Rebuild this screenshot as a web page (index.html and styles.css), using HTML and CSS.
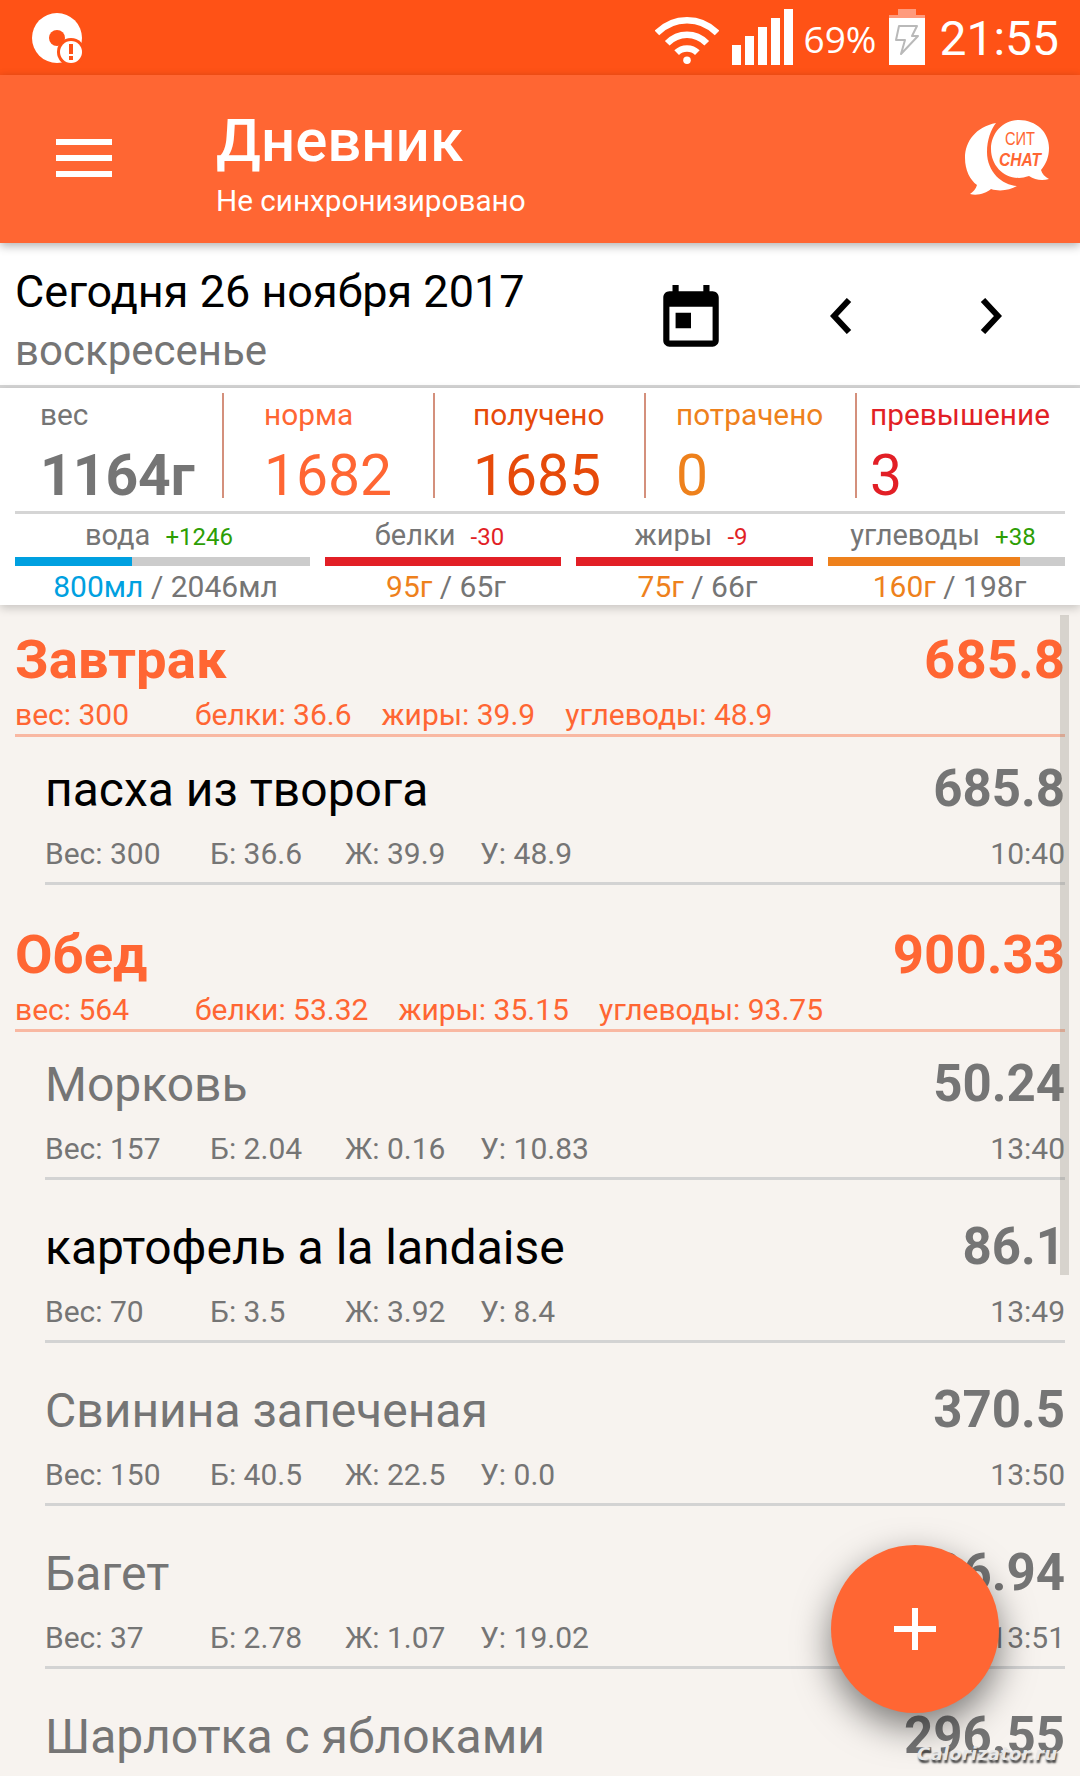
FILE: index.html
```html
<!DOCTYPE html>
<html lang="ru">

<head>
    <meta charset="UTF-8">
    <title>Дневник</title>
    <link rel="stylesheet" href="styles.css">
</head>

<body>
    <div id="wrap">
        <div class="status">
            <svg class="status-app" width="56" height="56" viewBox="0 0 56 56">
                <circle cx="25" cy="25" r="25" fill="#fff" />
                <circle cx="25" cy="25" r="8" fill="#ff5216" />
                <circle cx="39" cy="39" r="14" fill="#ff5216" />
                <circle cx="39" cy="39" r="11" fill="#fff" />
                <rect x="37" y="31" width="4" height="10" fill="#ff5216" />
                <rect x="37" y="43" width="4" height="4" fill="#ff5216" />
            </svg>
            <div class="status-right">
                <svg class="status-wifi" width="64" height="51" viewBox="0 0 68 54">
                    <path d="M2 20C20 2 48 2 66 20" />
                    <path d="M13 31C25 19 43 19 55 31" />
                    <path d="M23 41C29 35 39 35 45 41" />
                    <circle cx="34" cy="49" r="4" fill="#fff" stroke="none" />
                </svg>
                <div class="signal">
                    <span class="s1"></span>
                    <span class="s2"></span>
                    <span class="s3"></span>
                    <span class="s4"></span>
                    <span class="s5"></span>
                </div>
                <span class="percent">69%</span>
                <svg class="battery" width="36" height="56" viewBox="0 0 36 56">
                    <rect x="9" y="0" width="18" height="6" fill="#ff9a7c" />
                    <rect x="0" y="6" width="36" height="3" fill="#ff9a7c" />
                    <rect x="0" y="9" width="36" height="47" fill="#fff" />
                    <path d="M10 17H28L23 27H29L12 45L16 31H7Z" fill="none" stroke="#b9b9b9" stroke-width="2" stroke-linejoin="round" />
                </svg>
                <span class="clock">21:55</span>
            </div>
        </div>

        <div class="toolbar">
            <div class="burger"><span></span><span></span><span></span></div>
            <div class="toolbar-title">
                <h1>Дневник</h1>
                <p>Не синхронизировано</p>
            </div>
            <svg class="chat" width="90" height="76" viewBox="0 0 90 76">
                <path d="M32 3C12 7 1 21 1 38C1 50 6 60 13 65C12 69 9 72 6 74C14 76 22 73 27 69C36 72 46 70 53 66C38 65 23 52 23 32C23 20 27 9 32 3Z" fill="#fff" />
                <path d="M55 0C72 0 85 12 85 28C85 37 82 44 77 50C78 54 81 57 85 59C78 61 71 60 65 56C61 57 58 58 55 58C39 58 27 45 27 29C27 13 39 0 55 0Z" fill="#fff" />
                <text x="41" y="25" class="chat-top" textLength="30" lengthAdjust="spacingAndGlyphs">СИТ</text>
                <text x="35" y="46" class="chat-bottom" textLength="42" lengthAdjust="spacingAndGlyphs">CHAT</text>
            </svg>
        </div>

        <div class="date">
            <div class="date-text">
                <div class="date-main">Сегодня 26 ноября 2017</div>
                <div class="date-sub">воскресенье</div>
            </div>
            <svg class="cal" width="74" height="74" viewBox="0 0 24 24">
                <path d="M12 10H7v5h5zM16 1v2H8V1H6v2H5c-1.11 0-1.99.9-1.99 2L3 19c0 1.1.89 2 2 2h14c1.1 0 2-.9 2-2V5c0-1.1-.9-2-2-2h-1V1h-2zm3 18H5V8h14v11z" />
            </svg>
            <svg class="arrow-left" width="22" height="36" viewBox="0 0 22 36">
                <path d="M19 2L4 18L19 34" />
            </svg>
            <svg class="arrow-right" width="22" height="36" viewBox="0 0 22 36">
                <path d="M3 2L18 18L3 34" />
            </svg>
        </div>

        <div class="summary">
            <div class="totals">
                <div class="total t-weight"><span>вес</span><b>1164г</b></div>
                <div class="total t-norm"><span>норма</span><b>1682</b></div>
                <div class="total t-got"><span>получено</span><b>1685</b></div>
                <div class="total t-spent"><span>потрачено</span><b>0</b></div>
                <div class="total t-over"><span>превышение</span><b>3</b></div>
            </div>
            <div class="macros">
                <div class="macro">
                    <div class="macro-name">вода <em class="plus">+1246</em></div>
                    <div class="bar"><div class="fill blue" style="width: 39.5%"></div></div>
                    <div class="macro-val"><span class="c-blue">800мл</span> / 2046мл</div>
                </div>
                <div class="macro">
                    <div class="macro-name">белки <em class="minus">-30</em></div>
                    <div class="bar"><div class="fill red" style="width: 100%"></div></div>
                    <div class="macro-val"><span class="c-orange">95г</span> / 65г</div>
                </div>
                <div class="macro">
                    <div class="macro-name">жиры <em class="minus">-9</em></div>
                    <div class="bar"><div class="fill red" style="width: 100%"></div></div>
                    <div class="macro-val"><span class="c-orange">75г</span> / 66г</div>
                </div>
                <div class="macro">
                    <div class="macro-name">углеводы <em class="plus">+38</em></div>
                    <div class="bar"><div class="fill orange" style="width: 81%"></div></div>
                    <div class="macro-val"><span class="c-orange">160г</span> / 198г</div>
                </div>
            </div>
        </div>

        <div class="list">
            <div class="meal top">
                <div class="meal-top"><span>Завтрак</span><span>685.8</span></div>
                <div class="meal-sub"><span class="m-w">вес: 300</span><span>белки: 36.6</span><span>жиры: 39.9</span><span>углеводы: 48.9</span></div>
            </div>
            <div class="item first">
                <div class="item-top"><span class="dark">пасха из творога</span><b>685.8</b></div>
                <div class="item-sub"><span class="i-w">Вес: 300</span><span class="i-b">Б: 36.6</span><span class="i-f">Ж: 39.9</span><span class="i-c">У: 48.9</span><span class="time">10:40</span></div>
            </div>

            <div class="meal next">
                <div class="meal-top"><span>Обед</span><span>900.33</span></div>
                <div class="meal-sub"><span class="m-w">вес: 564</span><span>белки: 53.32</span><span>жиры: 35.15</span><span>углеводы: 93.75</span></div>
            </div>
            <div class="item first">
                <div class="item-top"><span>Морковь</span><b>50.24</b></div>
                <div class="item-sub"><span class="i-w">Вес: 157</span><span class="i-b">Б: 2.04</span><span class="i-f">Ж: 0.16</span><span class="i-c">У: 10.83</span><span class="time">13:40</span></div>
            </div>
            <div class="item">
                <div class="item-top"><span class="dark">картофель a la landaise</span><b>86.1</b></div>
                <div class="item-sub"><span class="i-w">Вес: 70</span><span class="i-b">Б: 3.5</span><span class="i-f">Ж: 3.92</span><span class="i-c">У: 8.4</span><span class="time">13:49</span></div>
            </div>
            <div class="item">
                <div class="item-top"><span>Свинина запеченая</span><b>370.5</b></div>
                <div class="item-sub"><span class="i-w">Вес: 150</span><span class="i-b">Б: 40.5</span><span class="i-f">Ж: 22.5</span><span class="i-c">У: 0.0</span><span class="time">13:50</span></div>
            </div>
            <div class="item">
                <div class="item-top"><span>Багет</span><b>96.94</b></div>
                <div class="item-sub"><span class="i-w">Вес: 37</span><span class="i-b">Б: 2.78</span><span class="i-f">Ж: 1.07</span><span class="i-c">У: 19.02</span><span class="time">13:51</span></div>
            </div>
            <div class="item">
                <div class="item-top"><span>Шарлотка с яблоками</span><b>296.55</b></div>
            </div>
        </div>

        <div class="scroll"></div>
        <div class="fab"><span class="fab-h"></span><span class="fab-v"></span></div>
        <div class="mark">Calorizator.ru</div>
    </div>
</body>

</html>
```

FILE: styles.css
```css
* {
    margin: 0;
    padding: 0;
    box-sizing: border-box;
}

html,
body {
    width: 1080px;
    height: 1776px;
    overflow: hidden;
}

body {
    font-family: Roboto, "Noto Sans", sans-serif;
    color: #757575;
    background: #f7f3ef;
}

#wrap {
    position: relative;
    width: 1080px;
    height: 1776px;
    overflow: hidden;
}

/* status bar */
.status {
    height: 75px;
    background: #ff5216;
    display: flex;
    justify-content: space-between;
    align-items: flex-start;
    padding: 13px 21px 0 32px;
    color: #fff;
}

.status-right {
    display: flex;
    align-items: flex-start;
    margin-top: -4px;
}

.status-wifi {
    margin: 5px 0 0 0;
}

.status-wifi path {
    fill: none;
    stroke: #fff;
    stroke-width: 7;
}

.signal {
    display: flex;
    align-items: flex-end;
    gap: 4px;
    height: 56px;
    margin-left: 13px;
}

.signal span {
    width: 9px;
    background: #fff;
}

.s1 { height: 20px; }
.s2 { height: 29px; }
.s3 { height: 38px; }
.s4 { height: 47px; }
.s5 { height: 56px; }

.percent {
    font-family: "Open Sans", sans-serif;
    font-size: 37px;
    line-height: 56px;
    margin: 2px 0 0 11px;
}

.battery {
    margin-left: 13px;
}

.clock {
    font-size: 48px;
    line-height: 56px;
    margin: 2px 0 0 14px;
}

/* toolbar */
.toolbar {
    position: relative;
    height: 168px;
    background: #ff6633;
    display: flex;
    align-items: flex-start;
    color: #fff;
    box-shadow: 0 3px 9px rgba(0, 0, 0, .3);
}

.burger {
    width: 56px;
    margin: 64px 0 0 56px;
    display: flex;
    flex-direction: column;
    gap: 10px;
}

.burger span {
    height: 6px;
    background: #fff;
}

.toolbar-title {
    margin: 37px 0 0 104px;
    flex: 1;
}

.toolbar-title h1 {
    font-size: 60px;
    font-weight: 500;
    line-height: 58px;
}

.toolbar-title p {
    font-size: 29.7px;
    line-height: 36px;
    margin-top: 13px;
}

.chat {
    margin: 45px 26px 0 0;
}

.chat-top,
.chat-bottom {
    fill: #ff6633;
    font-family: "Liberation Sans", sans-serif;
}

.chat-top {
    font-size: 19px;
}

.chat-bottom {
    font-size: 18px;
    font-weight: 700;
    font-style: italic;
}

/* date row */
.date {
    height: 145px;
    background: #fff;
    border-bottom: 3px solid #d5d5d5;
    display: flex;
    align-items: flex-start;
    padding-left: 15px;
}

.date-text {
    width: 639px;
    padding-top: 23px;
}

.date-main {
    font-size: 45px;
    line-height: 52px;
    color: #000;
}

.date-sub {
    font-size: 42px;
    line-height: 52px;
    margin-top: 7px;
}

.cal {
    margin-top: 39px;
}

.arrow-left,
.arrow-right {
    margin-top: 55px;
}

.arrow-left {
    margin-left: 102px;
}

.arrow-right {
    margin-left: 128px;
}

.arrow-left path,
.arrow-right path {
    fill: none;
    stroke: #000;
    stroke-width: 6;
}

/* summary */
.summary {
    position: relative;
    height: 217px;
    background: #fff;
    padding: 0 15px;
    box-shadow: 0 3px 9px rgba(0, 0, 0, .2);
}

.totals {
    height: 126px;
    margin: 0 0 0 -15px;
    padding-top: 5px;
    width: 1080px;
    display: grid;
    grid-template-columns: 222px 211px 211px 211px 225px;
    position: relative;
}

.totals::after {
    content: "";
    position: absolute;
    left: 15px;
    right: 15px;
    bottom: 0;
    height: 3px;
    background: #d5d5d5;
}

.total {
    height: 105px;
    border-left: 2px solid #d4907c;
}

.total span {
    display: block;
    font-size: 29.8px;
    line-height: 34px;
    margin-top: 5px;
}

.total b {
    display: block;
    font-size: 57px;
    font-weight: 400;
    line-height: 60px;
    margin-top: 14px;
}

.t-weight {
    border-left: 0;
    padding-left: 40px;
}

.t-weight b {
    font-weight: 700;
}

.t-norm {
    padding-left: 40px;
    color: #ff6633;
}

.t-got {
    padding-left: 38px;
    color: #e64a0a;
}

.t-spent {
    padding-left: 30px;
    color: #ee811c;
}

.t-over {
    padding-left: 13px;
    color: #e21f26;
}

.macros {
    display: grid;
    grid-template-columns: 295px 236px 237px 237px;
    gap: 15px;
}

.macro {
    text-align: center;
}

.macro-name {
    font-size: 29px;
    line-height: 34px;
    margin-top: 4px;
    padding-right: 7px;
}

.macro-name em {
    font-style: normal;
    font-size: 24px;
    margin-left: 8px;
}

.plus {
    color: #2d9e05;
}

.minus {
    color: #e21f26;
}

.bar {
    height: 9px;
    margin-top: 3px;
    background: #ccc;
}

.fill {
    height: 9px;
}

.blue { background: #00a0e0; }
.red { background: #e21f26; }
.orange { background: #ee811c; }

.macro-val {
    font-size: 30px;
    line-height: 36px;
    margin-top: 3px;
    padding-left: 6px;
}

.c-blue { color: #00a0e0; }
.c-orange { color: #ee811c; }

/* list */
.meal {
    height: 130px;
    margin: 0 15px;
    padding-bottom: 1px;
    border-bottom: 3px solid #f9b8a2;
    color: #ff6633;
    display: flex;
    flex-direction: column;
    justify-content: flex-end;
}

.meal.top {
    height: 132px;
}

.meal.next {
    margin-top: 17px;
}

.meal-top {
    display: flex;
    justify-content: space-between;
    font-size: 54.5px;
    font-weight: 700;
    line-height: 62px;
}

.meal-sub {
    display: flex;
    gap: 30px;
    font-size: 30px;
    line-height: 36px;
    margin-top: 7px;
}

.m-w {
    width: 150px;
}

.item {
    height: 163px;
    margin: 0 15px 0 45px;
    border-bottom: 3px solid #d3d3d3;
    padding-top: 40px;
}

.item.first {
    height: 148px;
    padding-top: 25px;
}

.item-top {
    display: flex;
    justify-content: space-between;
    font-size: 48px;
    line-height: 56px;
}

.item-top b {
    font-size: 51px;
    font-weight: 700;
    margin-top: -1px;
}

.dark {
    color: #000;
}

.item-sub {
    display: flex;
    font-size: 30px;
    line-height: 36px;
    margin-top: 18px;
}

.i-w { width: 165px; }
.i-b { width: 135px; }
.i-f { width: 135px; }

.time {
    margin-left: auto;
}

/* things over the list */
.scroll {
    position: absolute;
    left: 1060px;
    top: 615px;
    width: 9px;
    height: 660px;
    background: rgba(120, 115, 105, .25);
}

.fab {
    position: absolute;
    left: 831px;
    top: 1545px;
    width: 168px;
    height: 168px;
    border-radius: 50%;
    background: #ff6633;
    box-shadow: 0 14px 36px rgba(0, 0, 0, .5);
}

.fab-h {
    position: absolute;
    left: 63px;
    top: 81px;
    width: 42px;
    height: 6px;
    background: #fff;
}

.fab-v {
    position: absolute;
    left: 81px;
    top: 63px;
    width: 6px;
    height: 42px;
    background: #fff;
}

.mark {
    position: absolute;
    left: 917px;
    top: 1743px;
    font-family: "DejaVu Sans", sans-serif;
    font-size: 18px;
    font-weight: 700;
    font-style: italic;
    letter-spacing: .2px;
    color: #e8e8e8;
    text-shadow: 1px 3px 2px #444;
}
```
